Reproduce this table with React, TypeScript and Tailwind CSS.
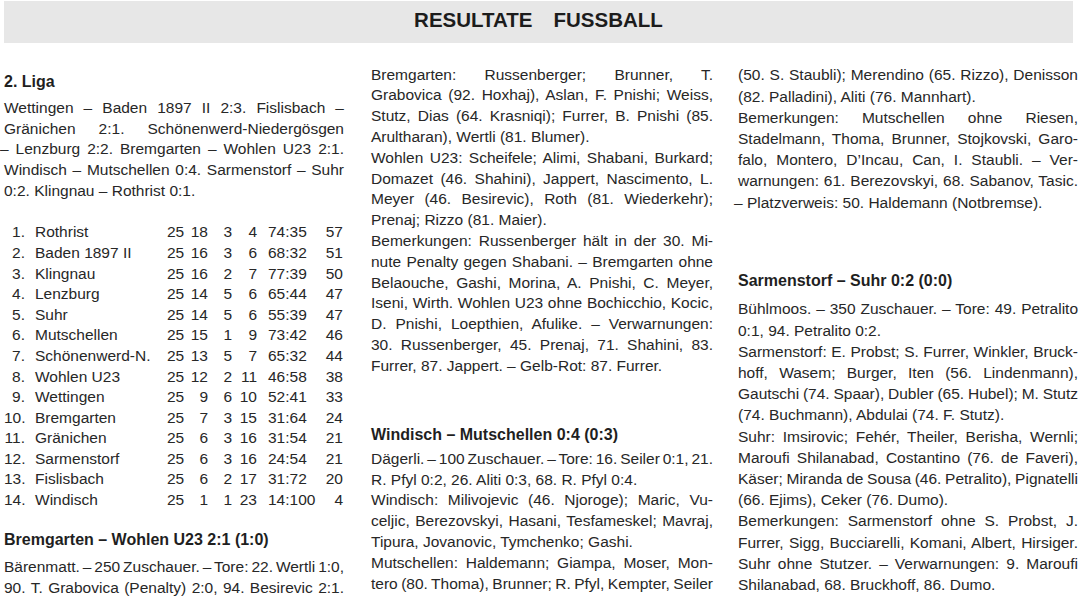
import React from "react";

type Row = [string, string, string, string, string, string, string, string];

const table: Row[] = [
  ["1.", "Rothrist", "25", "18", "3", "4", "74:35", "57"],
  ["2.", "Baden 1897 II", "25", "16", "3", "6", "68:32", "51"],
  ["3.", "Klingnau", "25", "16", "2", "7", "77:39", "50"],
  ["4.", "Lenzburg", "25", "14", "5", "6", "65:44", "47"],
  ["5.", "Suhr", "25", "14", "5", "6", "55:39", "47"],
  ["6.", "Mutschellen", "25", "15", "1", "9", "73:42", "46"],
  ["7.", "Schönenwerd-N.", "25", "13", "5", "7", "65:32", "44"],
  ["8.", "Wohlen U23", "25", "12", "2", "11", "46:58", "38"],
  ["9.", "Wettingen", "25", "9", "6", "10", "52:41", "33"],
  ["10.", "Bremgarten", "25", "7", "3", "15", "31:64", "24"],
  ["11.", "Gränichen", "25", "6", "3", "16", "31:54", "21"],
  ["12.", "Sarmenstorf", "25", "6", "3", "16", "24:54", "21"],
  ["13.", "Fislisbach", "25", "6", "2", "17", "31:72", "20"],
  ["14.", "Windisch", "25", "1", "1", "23", "14:100", "4"],
];

// one printed line per entry; all but the last are justified to the column
const Para = ({ lines, open = false }: { lines: string[]; open?: boolean }) => (
  <div>
    {lines.map((line, i) => {
      const justify = open || i < lines.length - 1;
      const hang = line.startsWith("– ");
      return (
        <div
          key={i}
          className={
            (justify
              ? "text-justify [text-align-last:justify] [word-spacing:-3px] "
              : "") + (hang ? "-ml-[4px]" : "")
          }
        >
          {line}
        </div>
      );
    })}
  </div>
);

const Heading = ({ children, className }: { children: React.ReactNode; className: string }) => (
  <div className={"text-[16px] font-bold text-[#1f1f1f] " + className}>{children}</div>
);

const Standings = () => (
  <div className="mt-[20.5px] leading-[20.6px]">
    {table.map((r) => (
      <div
        key={r[0]}
        className="grid grid-cols-[21px_142px_17px_24px_24px_25px_62px_24px]"
      >
        <span className="text-right">{r[0]}</span>
        <span className="pl-[10px]">{r[1]}</span>
        <span>{r[2]}</span>
        <span className="text-right">{r[3]}</span>
        <span className="text-right">{r[4]}</span>
        <span className="text-right">{r[5]}</span>
        <span className="pl-[11px]">{r[6]}</span>
        <span className="text-right">{r[7]}</span>
      </div>
    ))}
  </div>
);

export default function App() {
  return (
    <div className="w-[1080px] h-[599px] overflow-hidden bg-white text-[#272727] font-['Liberation_Sans',Arial,sans-serif] text-[15.5px]">
      <header className="mt-[1px] ml-[4px] w-[1069px] h-[42px] bg-[#e7e7e7] flex items-center justify-center gap-[21px] pb-[4px] text-[20.5px] font-bold text-[#1c1c1c]">
        <span>RESULTATE</span>
        <span>FUSSBALL</span>
      </header>

      <main className="flex pl-[4px] mt-[21.6px]">
        <section className="w-[340px] leading-[20.8px]">
          <Heading className="mt-[7.7px]">2. Liga</Heading>
          <div className="mt-[4.8px]">
            <Para
              lines={[
                "Wettingen – Baden 1897 II 2:3. Fislisbach –",
                "Gränichen 2:1. Schönenwerd-Niedergösgen",
                "– Lenzburg 2:2. Bremgarten – Wohlen U23 2:1.",
                "Windisch – Mutschellen 0:4. Sarmenstorf – Suhr",
                "0:2. Klingnau – Rothrist 0:1.",
              ]}
            />
          </div>
          <Standings />
          <Heading className="mt-[19.8px]">Bremgarten – Wohlen U23 2:1 (1:0)</Heading>
          <div className="mt-[5.9px]">
            <Para
              open
              lines={[
                "Bärenmatt. – 250 Zuschauer. – Tore: 22. Wertli 1:0,",
                "90. T. Grabovica (Penalty) 2:0, 94. Besirevic 2:1.",
              ]}
            />
          </div>
        </section>

        <section className="ml-[27px] w-[342px] leading-[20.8px]">
          <Para
            lines={[
              "Bremgarten: Russenberger; Brunner, T.",
              "Grabovica (92. Hoxhaj), Aslan, F. Pnishi; Weiss,",
              "Stutz, Dias (64. Krasniqi); Furrer, B. Pnishi (85.",
              "Arultharan), Wertli (81. Blumer).",
            ]}
          />
          <Para
            lines={[
              "Wohlen U23: Scheifele; Alimi, Shabani, Burkard;",
              "Domazet (46. Shahini), Jappert, Nascimento, L.",
              "Meyer (46. Besirevic), Roth (81. Wiederkehr);",
              "Prenaj; Rizzo (81. Maier).",
            ]}
          />
          <Para
            lines={[
              "Bemerkungen: Russenberger hält in der 30. Mi-",
              "nute Penalty gegen Shabani. – Bremgarten ohne",
              "Belaouche, Gashi, Morina, A. Pnishi, C. Meyer,",
              "Iseni, Wirth. Wohlen U23 ohne Bochicchio, Kocic,",
              "D. Pnishi, Loepthien, Afulike. – Verwarnungen:",
              "30. Russenberger, 45. Prenaj, 71. Shahini, 83.",
              "Furrer, 87. Jappert. – Gelb-Rot: 87. Furrer.",
            ]}
          />
          <Heading className="mt-[48px]">Windisch – Mutschellen 0:4 (0:3)</Heading>
          <div className="mt-[3.5px]">
            <Para
              lines={[
                "Dägerli. – 100 Zuschauer. – Tore: 16. Seiler 0:1, 21.",
                "R. Pfyl 0:2, 26. Aliti 0:3, 68. R. Pfyl 0:4.",
              ]}
            />
            <Para
              lines={[
                "Windisch: Milivojevic (46. Njoroge); Maric, Vu-",
                "celjic, Berezovskyi, Hasani, Tesfameskel; Mavraj,",
                "Tipura, Jovanovic, Tymchenko; Gashi.",
              ]}
            />
            <Para
              open
              lines={[
                "Mutschellen: Haldemann; Giampa, Moser, Mon-",
                "tero (80. Thoma), Brunner; R. Pfyl, Kempter, Seiler",
              ]}
            />
          </div>
        </section>

        <section className="ml-[25px] w-[340px] leading-[21.2px] -mt-[0.2px]">
          <Para
            lines={[
              "(50. S. Staubli); Merendino (65. Rizzo), Denisson",
              "(82. Palladini), Aliti (76. Mannhart).",
            ]}
          />
          <Para
            lines={[
              "Bemerkungen: Mutschellen ohne Riesen,",
              "Stadelmann, Thoma, Brunner, Stojkovski, Garo-",
              "falo, Montero, D’Incau, Can, I. Staubli. – Ver-",
              "warnungen: 61. Berezovskyi, 68. Sabanov, Tasic.",
              "– Platzverweis: 50. Haldemann (Notbremse).",
            ]}
          />
          <Heading className="mt-[57.3px]">Sarmenstorf – Suhr 0:2 (0:0)</Heading>
          <div className="mt-[7.1px]">
            <Para
              lines={[
                "Bühlmoos. – 350 Zuschauer. – Tore: 49. Petralito",
                "0:1, 94. Petralito 0:2.",
              ]}
            />
            <Para
              lines={[
                "Sarmenstorf: E. Probst; S. Furrer, Winkler, Bruck-",
                "hoff, Wasem; Burger, Iten (56. Lindenmann),",
                "Gautschi (74. Spaar), Dubler (65. Hubel); M. Stutz",
                "(74. Buchmann), Abdulai (74. F. Stutz).",
              ]}
            />
            <Para
              lines={[
                "Suhr: Imsirovic; Fehér, Theiler, Berisha, Wernli;",
                "Maroufi Shilanabad, Costantino (76. de Faveri),",
                "Käser; Miranda de Sousa (46. Petralito), Pignatelli",
                "(66. Ejims), Ceker (76. Dumo).",
              ]}
            />
            <Para
              lines={[
                "Bemerkungen: Sarmenstorf ohne S. Probst, J.",
                "Furrer, Sigg, Bucciarelli, Komani, Albert, Hirsiger.",
                "Suhr ohne Stutzer. – Verwarnungen: 9. Maroufi",
                "Shilanabad, 68. Bruckhoff, 86. Dumo.",
              ]}
            />
          </div>
        </section>
      </main>
    </div>
  );
}
